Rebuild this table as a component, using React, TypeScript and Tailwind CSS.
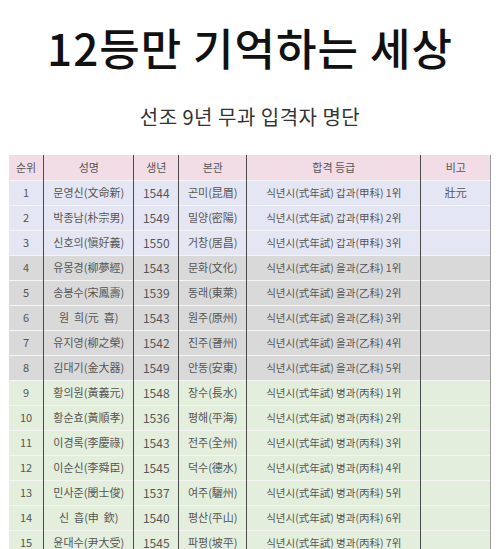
import React from 'react'

type Row = [string, string, string, string, string, string]

const rows: Row[] = [
  ['1', '문영신(文命新)', '1544', '곤미(昆眉)', '식년시(式年試) 갑과(甲科) 1위', '壯元'],
  ['2', '박종남(朴宗男)', '1549', '밀양(密陽)', '식년시(式年試) 갑과(甲科) 2위', ''],
  ['3', '신호의(愼好義)', '1550', '거창(居昌)', '식년시(式年試) 갑과(甲科) 3위', ''],
  ['4', '유몽경(柳夢經)', '1543', '문화(文化)', '식년시(式年試) 을과(乙科) 1위', ''],
  ['5', '송봉수(宋鳳壽)', '1539', '동래(東萊)', '식년시(式年試) 을과(乙科) 2위', ''],
  ['6', '원  희(元  喜)', '1543', '원주(原州)', '식년시(式年試) 을과(乙科) 3위', ''],
  ['7', '유지영(柳之榮)', '1542', '진주(晉州)', '식년시(式年試) 을과(乙科) 4위', ''],
  ['8', '김대기(金大器)', '1549', '안동(安東)', '식년시(式年試) 을과(乙科) 5위', ''],
  ['9', '황의원(黃義元)', '1548', '장수(長水)', '식년시(式年試) 병과(丙科) 1위', ''],
  ['10', '황순효(黃順孝)', '1536', '평해(平海)', '식년시(式年試) 병과(丙科) 2위', ''],
  ['11', '이경록(李慶祿)', '1543', '전주(全州)', '식년시(式年試) 병과(丙科) 3위', ''],
  ['12', '이순신(李舜臣)', '1545', '덕수(德水)', '식년시(式年試) 병과(丙科) 4위', ''],
  ['13', '민사준(閔士俊)', '1537', '여주(驪州)', '식년시(式年試) 병과(丙科) 5위', ''],
  ['14', '신  흡(申  欽)', '1540', '평산(平山)', '식년시(式年試) 병과(丙科) 6위', ''],
  ['15', '윤대수(尹大受)', '1545', '파평(坡平)', '식년시(式年試) 병과(丙科) 7위', ''],
]

const rowBg = (i: number) => {
  if (i < 3) return 'bg-[#e5e6f3]'
  if (i < 8) return 'bg-[#d9d9da]'
  return 'bg-[#e3efdc]'
}

const cell = 'border-r-[1.5px] border-[#4a4a4a] text-center whitespace-pre'

export default function App() {
  return (
    <div
      className="w-[500px] h-[549px] overflow-hidden bg-white flex flex-col items-center"
      style={{ fontFamily: '"Noto Sans CJK KR", "Noto Sans", sans-serif' }}
    >
      <h1 className="pt-[25px] text-[44px] leading-[44px] font-medium text-[#111] tracking-[1px]">
        12등만 기억하는 세상
      </h1>
      <h2 className="mt-[38px] text-[20px] leading-[20px] font-normal text-[#333] tracking-[0.5px]">
        선조 9년 무과 입격자 명단
      </h2>
      <table className="mt-[28px] w-[482px] table-fixed border-collapse text-[11px] text-[#555]">
        <colgroup>
          <col className="w-[35px]" />
          <col className="w-[90px]" />
          <col className="w-[45px]" />
          <col className="w-[68px]" />
          <col className="w-[174px]" />
          <col className="w-[70px]" />
        </colgroup>
        <thead>
          <tr className="h-[25px] bg-[#f2dde7] border-b border-[#f7f7f7]">
            <th className={`${cell} font-normal`}>순위</th>
            <th className={`${cell} font-normal`}>성명</th>
            <th className={`${cell} font-normal`}>생년</th>
            <th className={`${cell} font-normal`}>본관</th>
            <th className={`${cell} font-normal`}>합격 등급</th>
            <th className={`${cell} font-normal border-[#9a9a9a]`}>비고</th>
          </tr>
        </thead>
        <tbody>
          {rows.map((r, i) => (
            <tr key={i} className={`h-[25px] ${rowBg(i)} border-b border-[#f4f4f4]`}>
              <td className={cell}>{r[0]}</td>
              <td className={cell}>{r[1]}</td>
              <td className={`${cell} text-[12px]`}>{r[2]}</td>
              <td className={cell}>{r[3]}</td>
              <td className={`${cell} text-[10.5px]`}>{r[4]}</td>
              <td className={`${cell} border-[#9a9a9a]`}>{r[5]}</td>
            </tr>
          ))}
        </tbody>
      </table>
    </div>
  )
}
